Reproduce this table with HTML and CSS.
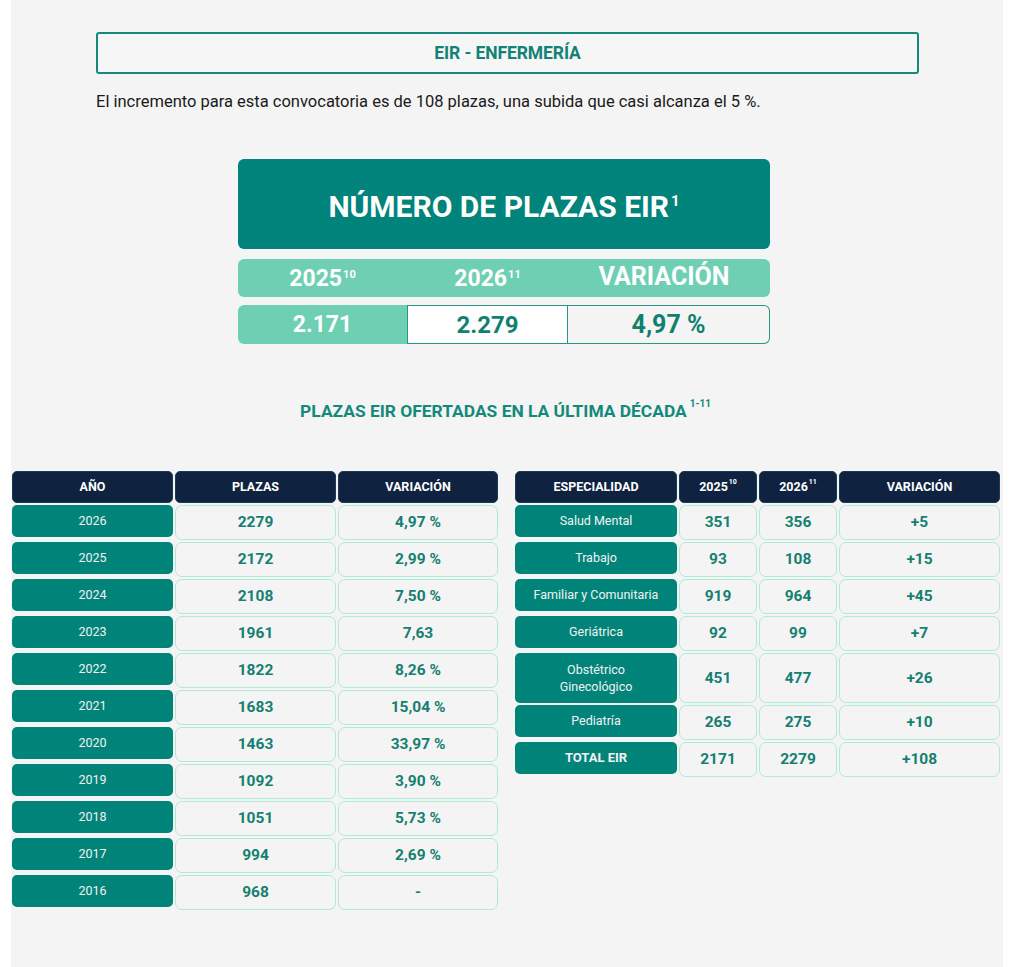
FILE: index.html
```html
<!DOCTYPE html>
<html lang="es">
<head>
<meta charset="utf-8">
<title>EIR - Enfermería</title>
<link rel="stylesheet" href="styles.css">
</head>
<body>
<div class="page">
  <div class="intro">
    <div class="section-box">EIR - ENFERMERÍA</div>
    <p class="lead">El incremento para esta convocatoria es de 108 plazas, una subida que casi alcanza el 5&nbsp;%.</p>
  </div>

  <div class="summary">
    <div class="summary-title">NÚMERO DE PLAZAS EIR<sup>1</sup></div>
    <div class="summary-head">
      <div class="sh c1">2025<sup>10</sup></div>
      <div class="sh c2">2026<sup>11</sup></div>
      <div class="sh c3">VARIACIÓN</div>
    </div>
    <div class="summary-vals">
      <div class="sv c1 filled">2.171</div>
      <div class="sv c2 white">2.279</div>
      <div class="sv c3 last">4,97&nbsp;%</div>
    </div>
  </div>

  <h2 class="decade">PLAZAS EIR OFERTADAS EN LA ÚLTIMA DÉCADA<sup>1-11</sup></h2>

  <div class="tables">
    <div class="grid left">
      <div class="th">AÑO</div><div class="th">PLAZAS</div><div class="th">VARIACIÓN</div>
      <div class="key">2026</div><div class="val">2279</div><div class="val">4,97 %</div>
      <div class="key">2025</div><div class="val">2172</div><div class="val">2,99 %</div>
      <div class="key">2024</div><div class="val">2108</div><div class="val">7,50 %</div>
      <div class="key">2023</div><div class="val">1961</div><div class="val">7,63</div>
      <div class="key">2022</div><div class="val">1822</div><div class="val">8,26 %</div>
      <div class="key">2021</div><div class="val">1683</div><div class="val">15,04 %</div>
      <div class="key">2020</div><div class="val">1463</div><div class="val">33,97 %</div>
      <div class="key">2019</div><div class="val">1092</div><div class="val">3,90 %</div>
      <div class="key">2018</div><div class="val">1051</div><div class="val">5,73 %</div>
      <div class="key">2017</div><div class="val">994</div><div class="val">2,69 %</div>
      <div class="key">2016</div><div class="val">968</div><div class="val">-</div>
    </div>

    <div class="grid right">
      <div class="th">ESPECIALIDAD</div><div class="th">2025<sup>10</sup></div><div class="th">2026<sup>11</sup></div><div class="th">VARIACIÓN</div>
      <div class="key">Salud Mental</div><div class="val">351</div><div class="val">356</div><div class="val">+5</div>
      <div class="key">Trabajo</div><div class="val">93</div><div class="val">108</div><div class="val">+15</div>
      <div class="key">Familiar y Comunitaria</div><div class="val">919</div><div class="val">964</div><div class="val">+45</div>
      <div class="key">Geriátrica</div><div class="val">92</div><div class="val">99</div><div class="val">+7</div>
      <div class="key tall">Obstétrico<br>Ginecológico</div><div class="val">451</div><div class="val">477</div><div class="val">+26</div>
      <div class="key">Pediatría</div><div class="val">265</div><div class="val">275</div><div class="val">+10</div>
      <div class="key bold">TOTAL EIR</div><div class="val">2171</div><div class="val">2279</div><div class="val">+108</div>
    </div>
  </div>
</div>
</body>
</html>
```

FILE: styles.css
```css
* { box-sizing: border-box; }
html, body { margin: 0; padding: 0; background: #ffffff; }
body { font-family: Roboto, "Liberation Sans", sans-serif; color: #151515; }

.page {
  width: 992px;
  margin-left: 11px;
  min-height: 967px;
  background: #f4f4f4;
  padding: 32px 0 40px 1px;
}

.intro { margin-left: 84px; width: 823px; }

.section-box {
  height: 42px;
  border: 2px solid #16897c;
  border-radius: 3px;
  background: #f6f6f6;
  display: flex;
  align-items: center;
  justify-content: center;
  color: #138276;
  font-weight: 700;
  font-size: 17.5px;
  letter-spacing: -0.1px;
}

.lead {
  margin: 18px 0 0 0;
  font-size: 16.5px;
  line-height: 20px;
  color: #1a1a1a;
}

.summary { width: 532px; margin: 47px 0 0 226px; }

.summary-title {
  height: 90px;
  background: #00837a;
  border-radius: 6px;
  color: #fff;
  font-weight: 700;
  font-size: 30px;
  display: flex;
  align-items: center;
  justify-content: center;
  padding-top: 4px;
}
.summary-title sup { font-size: 15px; position: relative; top: -5px; margin-left: 2px; }

.summary-head, .summary-vals { display: flex; margin-top: 10px; }
.summary-vals { margin-top: 8px; }
.c1 { width: 169px; }
.c2 { width: 161px; }
.c3 { width: 202px; }

.summary-head {
  height: 38px;
  background: #6fcfb2;
  border-radius: 6px;
}
.sh {
  color: #fff;
  font-weight: 700;
  font-size: 23px;
  display: flex;
  align-items: center;
  justify-content: center;
}
.sh sup { font-size: 11px; align-self: flex-start; margin-top: 9px; margin-left: 1px; }
.sh.c3 { font-size: 25px; padding-right: 10px; padding-bottom: 4px; }

.sv {
  height: 39px;
  font-weight: 700;
  font-size: 24px;
  display: flex;
  align-items: center;
  justify-content: center;
  color: #11806f;
}
.sv.filled { background: #6fcfb2; color: #fff; border-radius: 6px 0 0 6px; font-size: 23px; }
.sv.white { background: #fff; border: 1px solid #2b9585; }
.sv.last { background: #f4f4f4; border: 1px solid #2b9585; border-left: none; border-radius: 0 6px 6px 0; font-size: 25px; }

.decade {
  margin: 51px 0 0 0;
  text-align: center;
  color: #13897b;
  font-size: 17.4px;
  line-height: 24px;
  font-weight: 700;
  padding-right: 4px;
}
.decade sup { font-size: 10px; position: relative; top: -3px; margin-left: 3px; }

.tables {
  display: flex;
  gap: 17px;
  margin-top: 48px;
  align-items: flex-start;
}

.grid { display: grid; gap: 2px; grid-auto-rows: minmax(35px, auto); }
.grid.left { grid-template-columns: 161px 161px 160px; grid-template-rows: 32px; }
.grid.right { grid-template-columns: 162px 78px 78px 161px; grid-template-rows: 32px; }

.th {
  height: 32px;
  align-self: start;
  background: #0f2341;
  border-radius: 5px;
  color: #fff;
  font-weight: 700;
  font-size: 12.5px;
  display: flex;
  align-items: center;
  justify-content: center;
  border: 1px solid #1b3a55;
}
.th sup { font-size: 7px; align-self: flex-start; margin-top: 6px; margin-left: 1px; }

.key {
  height: 32px;
  align-self: start;
  background: #00847a;
  border-radius: 5px;
  color: #f2f2f2;
  font-size: 12.5px;
  display: flex;
  align-items: center;
  justify-content: center;
  text-align: center;
  line-height: 17px;
}
.key.tall { height: 50px; }
.key.bold { font-weight: 700; font-size: 13px; }

.val {
  min-height: 35px;
  border: 1px solid #aeead6;
  border-radius: 7px;
  background: #f4f4f4;
  color: #157f72;
  font-weight: 700;
  font-size: 15.5px;
  display: flex;
  align-items: center;
  justify-content: center;
}
```
